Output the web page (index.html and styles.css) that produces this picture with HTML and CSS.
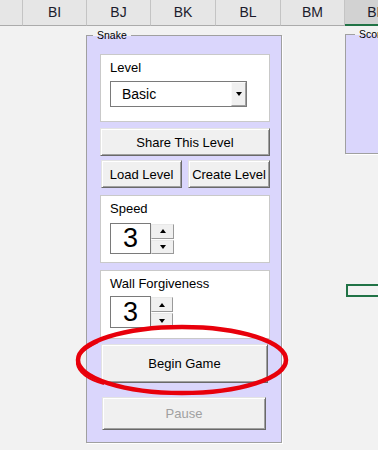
FILE: index.html
```html
<!DOCTYPE html>
<html>
<head>
<meta charset="utf-8">
<link rel="stylesheet" href="styles.css">
</head>
<body>
<div class="colhdr">
  <div class="ch ch-first"></div>
  <div class="ch">BI</div>
  <div class="ch">BJ</div>
  <div class="ch w65">BK</div>
  <div class="ch w65">BL</div>
  <div class="ch">BM</div>
  <div class="ch ch-sel">BN</div>
</div>

<div class="sheet">
  <div class="frame snake">
    <span class="frame-label">Snake</span>
    <div class="panel">
      <div class="plabel">Level</div>
      <div class="combo">
        <span class="combo-text">Basic</span>
        <span class="combo-btn"><span class="tri-down"></span></span>
      </div>
    </div>
    <div class="btn btn-share">Share This Level</div>
    <div class="btn-row">
      <div class="btn btn-load">Load Level</div>
      <div class="btn btn-create">Create Level</div>
    </div>
    <div class="panel panel-speed">
      <div class="plabel">Speed</div>
      <div class="spin spin-speed">
        <div class="spin-val">3</div>
        <div class="spin-btns">
          <div class="spin-b"><span class="tri-up"></span></div>
          <div class="spin-b"><span class="tri-down"></span></div>
        </div>
      </div>
    </div>
    <div class="panel panel-wall">
      <div class="plabel">Wall Forgiveness</div>
      <div class="spin spin-wall">
        <div class="spin-val">3</div>
        <div class="spin-btns">
          <div class="spin-b"><span class="tri-up"></span></div>
          <div class="spin-b"><span class="tri-down"></span></div>
        </div>
      </div>
    </div>
    <div class="btn btn-begin">Begin Game</div>
    <div class="btn btn-pause">Pause</div>
  </div>

  <div class="frame score">
    <span class="frame-label">Score</span>
  </div>

  <div class="cellsel"></div>

  <svg class="circle" width="240" height="100" viewBox="0 0 240 100">
    <ellipse cx="114" cy="40" rx="104" ry="33" fill="none" stroke="#e8000b" stroke-width="4.5"/>
    <path d="M30 22 C14 30 8 36 9 44 C10 52 20 60 36 64" fill="none" stroke="#e8000b" stroke-width="2"/>
  </svg>
</div>
</body>
</html>
```
FILE: styles.css
```css
html, body {
  margin: 0;
  padding: 0;
}
body {
  width: 378px;
  height: 450px;
  overflow: hidden;
  background: #f2f2f2;
  font-family: "Liberation Sans", Arial, sans-serif;
  color: #000;
}

.colhdr {
  display: flex;
  height: 26px;
  background: #e6e6e6;
  box-sizing: border-box;
}
.ch {
  box-sizing: border-box;
  flex: 0 0 64px;
  height: 26px;
  border-right: 1px solid #c4c4c4;
  border-bottom: 1px solid #ababab;
  font-size: 14px;
  line-height: 25px;
  text-align: center;
  color: #1b1b2b;
}
.ch-first { flex-basis: 23px; }
.w65 { flex-basis: 65px; }
.ch-sel {
  background: #d2d2d2;
  border-bottom: 2px solid #217346;
  border-right: none;
}

.sheet {
  position: relative;
  height: 424px;
}

.frame {
  position: absolute;
  box-sizing: border-box;
  border: 1px solid #a0a0a0;
  box-shadow: 1px 1px 0 #fff;
  background: #dad6fc;
}
.frame-label {
  position: absolute;
  top: -7px;
  left: 6px;
  padding: 0 4px;
  font-size: 10.5px;
  line-height: 12px;
  background: linear-gradient(#f2f2f2 0, #f2f2f2 7px, #dad6fc 7px);
}
.snake {
  left: 86px;
  top: 9px;
  width: 196px;
  height: 408px;
  padding: 18px 11px 0 13px;
  display: flex;
  flex-direction: column;
}
.score {
  left: 345px;
  top: 8px;
  width: 60px;
  height: 120px;
}
.score .frame-label { left: 9px; }

.cellsel {
  position: absolute;
  left: 346px;
  top: 258px;
  width: 40px;
  height: 13px;
  box-sizing: border-box;
  border: 2px solid #217346;
}

.circle {
  position: absolute;
  left: 68px;
  top: 294px;
}

.panel {
  box-sizing: border-box;
  height: 68px;
  background: #fff;
  border: 1px solid #c9c9c9;
  padding: 5px 0 0 9px;
  flex: none;
}
.plabel {
  font-size: 13px;
  line-height: 15px;
}

.combo {
  margin-top: 6px;
  box-sizing: border-box;
  width: 137px;
  height: 26px;
  border: 1px solid #7a7a7a;
  display: flex;
  align-items: stretch;
  background: #fff;
}
.combo-text {
  flex: 1;
  padding-left: 11px;
  font-size: 14px;
  line-height: 24px;
}
.combo-btn {
  box-sizing: border-box;
  width: 15px;
  background: #f0f0f0;
  border: 1px solid;
  border-color: #fafafa #a0a0a0 #a0a0a0 #fafafa;
  display: flex;
  align-items: center;
  justify-content: center;
}
.tri-down, .tri-up {
  width: 0;
  height: 0;
  border-left: 3.5px solid transparent;
  border-right: 3.5px solid transparent;
}
.tri-down { border-top: 4px solid #000; }
.tri-up { border-bottom: 4px solid #000; }

.btn {
  box-sizing: border-box;
  background: #f0f0f0;
  border: 1px solid;
  border-color: #e3e3e3 #696969 #696969 #e3e3e3;
  box-shadow: inset 1px 1px 0 #fff, inset -1px -1px 0 #a0a0a0;
  font-size: 13px;
  display: flex;
  align-items: center;
  justify-content: center;
  flex: none;
}
.btn-share {
  margin-top: 6px;
  height: 28px;
  width: 170px;
}
.btn-row {
  margin-top: 4px;
  display: flex;
  justify-content: space-between;
  flex: none;
}
.btn-load {
  margin-left: 1px;
  width: 81px;
  height: 28px;
}
.btn-create {
  width: 82px;
  height: 28px;
}
.panel-speed { margin-top: 7px; }
.panel-wall { margin-top: 7px; height: 69px; }

.spin {
  display: flex;
  margin-top: 7px;
}
.spin-wall { margin-top: 5px; }
.spin-val {
  box-sizing: border-box;
  width: 41px;
  height: 31px;
  border: 1px solid #7a7a7a;
  font-size: 27px;
  line-height: 29px;
  text-align: center;
}
.spin-wall .spin-val { height: 32px; line-height: 30px; }
.spin-btns {
  display: flex;
  flex-direction: column;
  width: 23px;
  padding-top: 1px;
  gap: 1px;
}
.spin-wall .spin-btns { width: 22px; }
.spin-b {
  box-sizing: border-box;
  flex: 1;
  background: #f0f0f0;
  border: 1px solid;
  border-color: #e8e8e8 #9a9a9a #9a9a9a #e8e8e8;
  display: flex;
  align-items: center;
  justify-content: center;
}

.btn-begin {
  margin-top: 5px;
  margin-left: 1px;
  width: 167px;
  height: 39px;
}
.btn-pause {
  margin-top: 14px;
  margin-left: 2px;
  width: 164px;
  height: 33px;
  color: #a0a0a0;
}
```
